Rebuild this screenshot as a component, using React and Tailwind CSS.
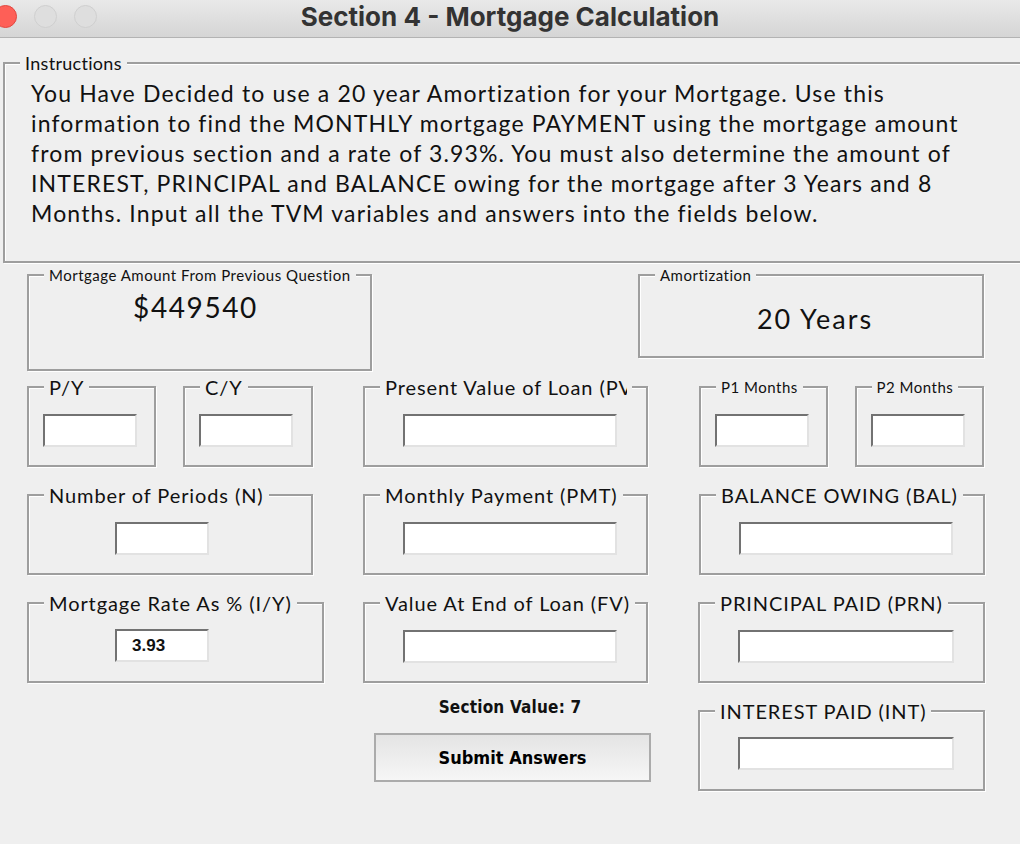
import React from 'react';

function Field({ left, width, top = 26, children }) {
  return (
    <div
      className="h-[33px] border-2 border-t-[#727272] border-l-[#727272] border-r-[#e2e2e2] border-b-[#e2e2e2] bg-white"
      style={{ marginLeft: left, marginTop: top, width }}
    >
      {children}
    </div>
  );
}

function TitledBox({ label, size = 'big', width, height, clipAt, children }) {
  const font = {
    big: 'text-[20px] leading-[24px] tracking-[0.9px]',
    mid: 'text-[18px] leading-[22px] tracking-[0.3px]',
    small: 'text-[15px] leading-[20px] tracking-[0.5px]',
  }[size];
  return (
    <div
      className="relative border-2 border-[#9e9e9e] shadow-[inset_1px_1px_0_#fff,1px_1px_0_#fff]"
      style={{ width, height }}
    >
      <div
        className={
          'absolute -top-[1px] left-[15px] -translate-y-1/2 bg-[#efefef] px-[5px] whitespace-nowrap text-[#111] ' + font
        }
      >
        {clipAt ? (
          <span className="block overflow-hidden" style={{ width: clipAt }}>
            {label}
          </span>
        ) : (
          label
        )}
      </div>
      {children}
    </div>
  );
}

class App extends React.Component {
  render() {
    return (
      <div className="w-[1020px] h-[844px] overflow-hidden bg-[#efefef] text-[#111] [font-family:Lato,'Noto_Sans',sans-serif]">
        {/* window title bar */}
        <div className="h-[38px] grid grid-cols-[1fr_auto_1fr] items-center border-b border-[#b3b3b3] bg-linear-to-b from-[#e9e9e9] to-[#d5d5d5]">
          <div className="flex items-center gap-[17px] -ml-[6px] -mt-[4px]">
            <span className="w-[23px] h-[23px] rounded-full bg-[#fe5f57] border border-[#e2463f]" />
            <span className="w-[23px] h-[23px] rounded-full bg-[#dedede] border border-[#cfcfcf]" />
            <span className="w-[23px] h-[23px] rounded-full bg-[#dedede] border border-[#cfcfcf]" />
          </div>
          <div className="-mt-[5px] text-[26px] font-bold text-[#333] [font-family:Inter,Roboto,sans-serif]">
            Section 4 - Mortgage Calculation
          </div>
          <div />
        </div>

        {/* instructions */}
        <div className="mt-[24px] ml-[3px] w-[1030px]">
          <TitledBox label="Instructions" size="mid" width={1030} height={201}>
            <div className="pl-[26px] pt-[14px] text-[23px] leading-[30px] tracking-[1.15px] whitespace-nowrap">
              <div>You Have Decided to use a 20 year Amortization for your Mortgage. Use this</div>
              <div>information to find the MONTHLY mortgage PAYMENT using the mortgage amount</div>
              <div>from previous section and a rate of 3.93%. You must also determine the amount of</div>
              <div>INTEREST, PRINCIPAL and BALANCE owing for the mortgage after 3 Years and 8</div>
              <div>Months. Input all the TVM variables and answers into the fields below.</div>
            </div>
          </TitledBox>
        </div>

        {/* amount + amortization */}
        <div className="mt-[11px] ml-[27px] w-[957px] flex justify-between items-start">
          <TitledBox label="Mortgage Amount From Previous Question" size="small" width={345} height={97}>
            <div className="pt-[14px] pr-[8px] text-center text-[28px] leading-[34px] tracking-[1.6px]">$449540</div>
          </TitledBox>
          <TitledBox label="Amortization" size="small" width={346} height={84}>
            <div className="pt-[26px] pl-[8px] text-center text-[27px] leading-[34px] tracking-[2px]">20 Years</div>
          </TitledBox>
        </div>

        {/* calculator fields */}
        <div className="mt-[15px] ml-[27px] grid grid-cols-[336px_335px_286px] auto-rows-[81px] gap-y-[27px]">
          <div className="flex gap-[27px]">
            <TitledBox label="P/Y" width={129} height={81}>
              <Field left={14} width={94} />
            </TitledBox>
            <TitledBox label="C/Y" width={130} height={81}>
              <Field left={14} width={94} />
            </TitledBox>
          </div>
          <TitledBox label="Present Value of Loan (PV)" width={285} height={81} clipAt={242}>
            <Field left={38} width={214} />
          </TitledBox>
          <div className="flex gap-[27px] pl-[1px]">
            <TitledBox label="P1 Months" size="small" width={129} height={81}>
              <Field left={14} width={94} />
            </TitledBox>
            <TitledBox label="P2 Months" size="small" width={130} height={81}>
              <Field left={14} width={94} />
            </TitledBox>
          </div>

          <TitledBox label="Number of Periods (N)" width={286} height={81}>
            <Field left={86} width={94} />
          </TitledBox>
          <TitledBox label="Monthly Payment (PMT)" width={285} height={81}>
            <Field left={38} width={214} />
          </TitledBox>
          <div className="pl-[1px]">
            <TitledBox label="BALANCE OWING (BAL)" width={286} height={81}>
              <Field left={38} width={214} />
            </TitledBox>
          </div>

          <TitledBox label="Mortgage Rate As % (I/Y)" width={297} height={81}>
            <Field left={86} width={94} top={25}>
              <div className="pl-[15px] text-[17px] leading-[29px] font-bold [font-family:'Liberation_Sans',Arial,sans-serif]">
                3.93
              </div>
            </Field>
          </TitledBox>
          <TitledBox label="Value At End of Loan (FV)" width={285} height={81}>
            <Field left={38} width={214} />
          </TitledBox>
          <TitledBox label="PRINCIPAL PAID  (PRN)" width={287} height={81}>
            <Field left={38} width={216} />
          </TitledBox>

          <div />
          <div className="-mt-[13px] w-[277px] ml-[11px] flex flex-col items-center">
            <div className="text-[17px] leading-[20px] font-bold [font-family:'DejaVu_Sans_Condensed','DejaVu_Sans',sans-serif] tracking-[0.2px] -ml-[5px]">
              Section Value: 7
            </div>
            <button className="mt-[16px] w-[277px] h-[49px] border-2 border-[#ababab] bg-linear-to-b from-[#e4e4e4] to-[#f6f6f6] text-[18px] font-bold text-black [font-family:'DejaVu_Sans_Condensed','DejaVu_Sans',sans-serif]">
              Submit Answers
            </button>
          </div>
          <TitledBox label="INTEREST PAID  (INT)" width={287} height={81}>
            <Field left={38} width={216} top={25} />
          </TitledBox>
        </div>
      </div>
    );
  }
}

export default App;
